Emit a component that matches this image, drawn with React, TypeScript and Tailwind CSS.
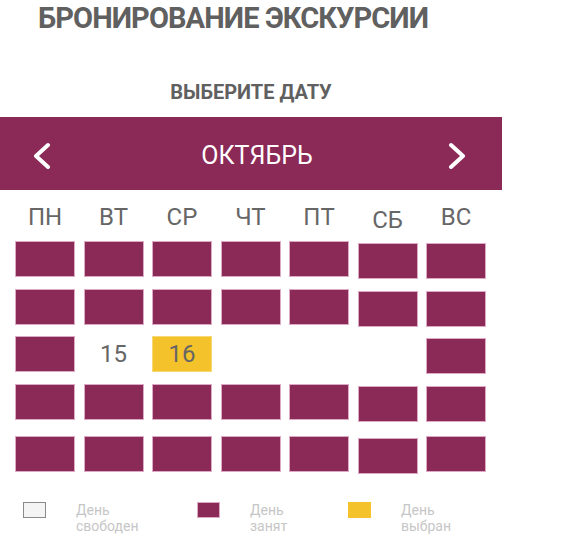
import React from "react";

const BUSY = "w-[60px] h-[36px] border border-[#dcaac4] bg-[#8b2957]";

function Busy({ low }: { low?: boolean }) {
  return <div className={BUSY + (low ? " mt-[2px]" : "")} />;
}

function Empty() {
  return <div className="w-[60px] h-[36px]" />;
}

function Row({ cells, className }: { cells: React.ReactNode[]; className: string }) {
  return (
    <div className={"grid grid-cols-[repeat(7,60px)] gap-x-[8.5px] items-start ml-[15px] " + className}>
      {cells}
    </div>
  );
}

function Chevron({ dir }: { dir: "left" | "right" }) {
  return (
    <svg width="20" height="30" viewBox="0 0 20 30" className="shrink-0">
      <path
        d={dir === "left" ? "M16 6 L4 17 L16 28" : "M4 6 L16 17 L4 28"}
        fill="none"
        stroke="#ffffff"
        strokeWidth="4"
        strokeLinecap="round"
        strokeLinejoin="round"
      />
    </svg>
  );
}

export default function App() {
  const days = ["ПН", "ВТ", "СР", "ЧТ", "ПТ", "СБ", "ВС"];
  return (
    <div className="w-[570px] h-[535px] bg-white overflow-hidden font-['Roboto',sans-serif]">
      <h1 className="pl-[38px] text-[29px] leading-[37px] font-bold tracking-[-0.9px] text-[#606060]">
        БРОНИРОВАНИЕ ЭКСКУРСИИ
      </h1>
      <div className="w-[502px] mt-[44px] text-center text-[20px] leading-[22px] font-bold text-[#606060]">
        ВЫБЕРИТЕ ДАТУ
      </div>
      <div className="mt-[14px] w-[502px] h-[73px] bg-[#8b2957] flex items-center">
        <div className="ml-[32px]">
          <Chevron dir="left" />
        </div>
        <div className="flex-1 text-center pl-[15px] pt-[5px] text-white text-[25px] leading-[28px]">
          ОКТЯБРЬ
        </div>
        <div className="mr-[35px]">
          <Chevron dir="right" />
        </div>
      </div>
      <div className="mt-[13px] grid grid-cols-[repeat(7,60px)] gap-x-[8.5px] ml-[15px] text-[24px] leading-[28px] text-[#666666] text-center">
        {days.map((d) => (
          <div key={d} className={d === "СБ" ? "translate-y-[3px]" : ""}>
            {d}
          </div>
        ))}
      </div>
      <Row
        className="mt-[10px]"
        cells={[
          <Busy key="1" />,
          <Busy key="2" />,
          <Busy key="3" />,
          <Busy key="4" />,
          <Busy key="5" />,
          <Busy key="6" low />,
          <Busy key="7" low />,
        ]}
      />
      <Row
        className="mt-[10px]"
        cells={[
          <Busy key="1" />,
          <Busy key="2" />,
          <Busy key="3" />,
          <Busy key="4" />,
          <Busy key="5" />,
          <Busy key="6" low />,
          <Busy key="7" low />,
        ]}
      />
      <Row
        className="mt-[9px]"
        cells={[
          <Busy key="1" />,
          <div key="2" className="w-[60px] h-[36px] flex items-center justify-center text-[24px] text-[#666666]">
            15
          </div>,
          <div
            key="3"
            className="w-[60px] h-[36px] flex items-center justify-center bg-[#f4c22b] border border-[#f7d873] text-[24px] text-[#666666]"
          >
            16
          </div>,
          <Empty key="4" />,
          <Empty key="5" />,
          <Empty key="6" />,
          <Busy key="7" low />,
        ]}
      />
      <Row
        className="mt-[10px]"
        cells={[
          <Busy key="1" />,
          <Busy key="2" />,
          <Busy key="3" />,
          <Busy key="4" />,
          <Busy key="5" />,
          <Busy key="6" low />,
          <Busy key="7" low />,
        ]}
      />
      <Row
        className="mt-[14px]"
        cells={[
          <Busy key="1" />,
          <Busy key="2" />,
          <Busy key="3" />,
          <Busy key="4" />,
          <Busy key="5" />,
          <Busy key="6" low />,
          <Busy key="7" />,
        ]}
      />
      <div className="mt-[28px] ml-[23px] flex items-start text-[14px] leading-[16px] text-[#c6c6c6]">
        <div className="w-[174px] flex items-start">
          <div className="w-[23px] h-[16px] border border-[#8a8a8a] bg-[#f4f4f4]" />
          <div className="ml-[30px]">
            <div>День</div>
            <div>свободен</div>
          </div>
        </div>
        <div className="w-[151px] flex items-start">
          <div className="w-[23px] h-[16px] border border-[#dcaac4] bg-[#8b2957]" />
          <div className="ml-[30px]">
            <div>День</div>
            <div>занят</div>
          </div>
        </div>
        <div className="flex items-start">
          <div className="w-[23px] h-[16px] bg-[#f4c22b]" />
          <div className="ml-[30px]">
            <div>День</div>
            <div>выбран</div>
          </div>
        </div>
      </div>
    </div>
  );
}
